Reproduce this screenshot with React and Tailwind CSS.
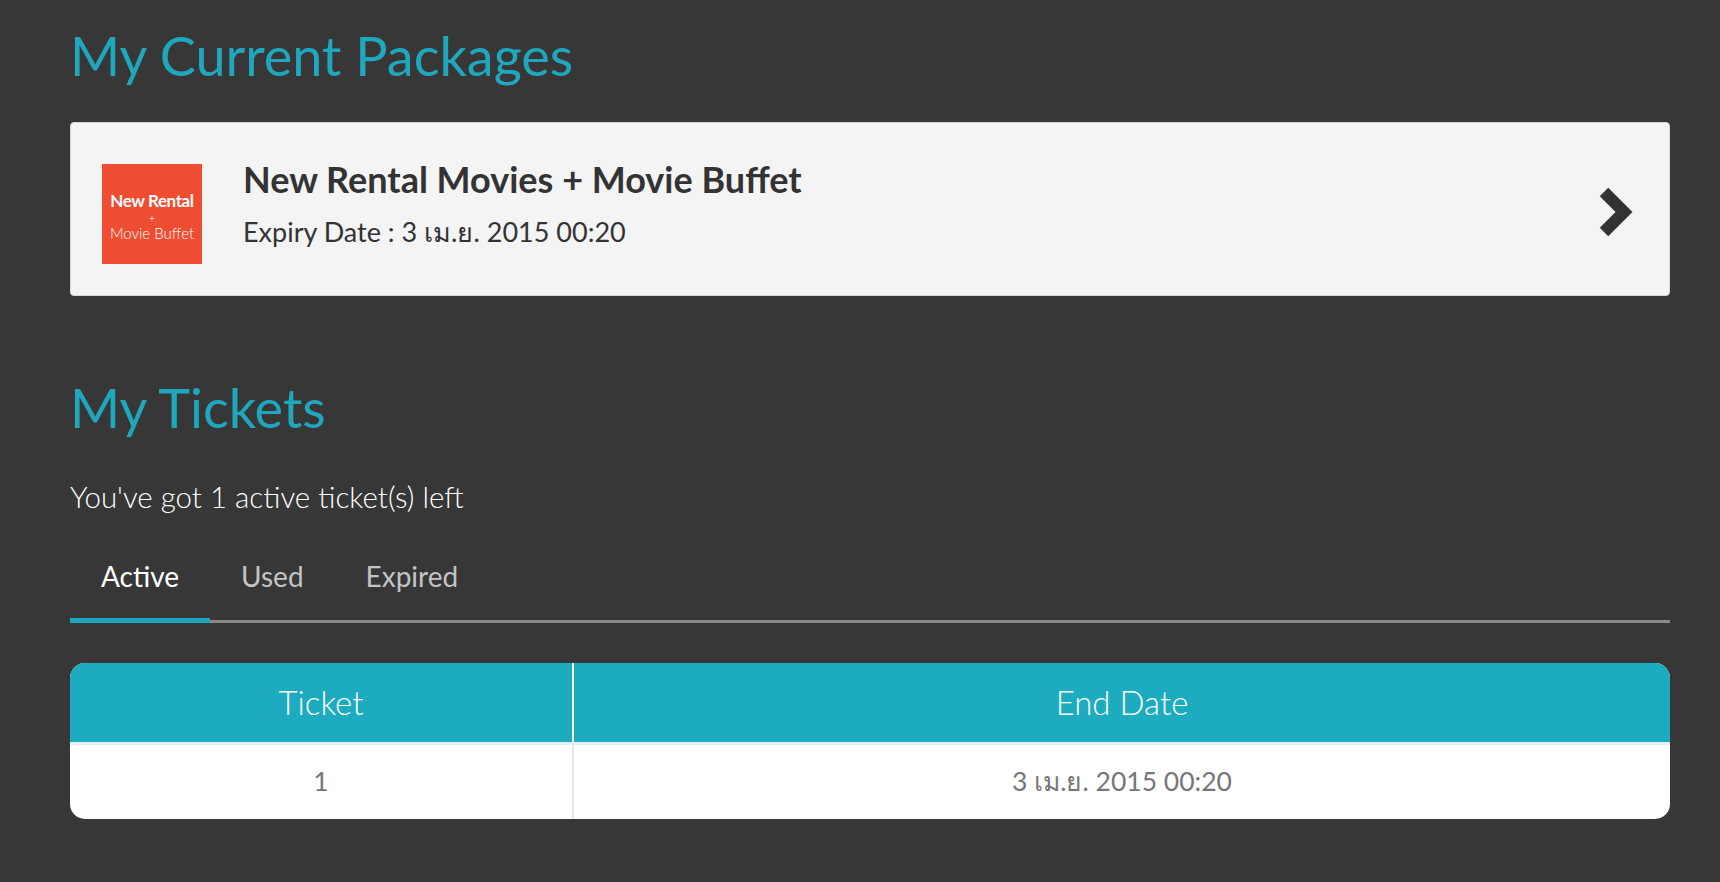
import React, { useState } from "react";

const packages = [
  {
    id: "rental-buffet",
    name: "New Rental Movies + Movie Buffet",
    expiry: "3 เม.ย. 2015 00:20",
  },
];

const tickets = {
  active: [{ no: 1, end: "3 เม.ย. 2015 00:20" }],
  used: [],
  expired: [],
};

const font = "font-['Lato','Noto_Sans',sans-serif]";

function PackageLogo() {
  return (
    <div className="w-[100px] h-[100px] mt-[11px] pt-[5px] shrink-0 bg-[#ef4d31] flex flex-col items-center justify-center text-white font-['Lato',sans-serif] leading-none">
      <div className="text-[17px] font-bold tracking-[-0.4px]">New Rental</div>
      <div className="text-[11px] font-light my-[3px]">+</div>
      <div className="text-[15px] font-light">Movie Buffet</div>
    </div>
  );
}

function Chevron() {
  return (
    <svg width="36" height="54" viewBox="0 0 36 52" className="shrink-0 mt-[6px]">
      <polyline
        points="7,6 27,26 7,46"
        fill="none"
        stroke="#333333"
        strokeWidth="12"
        strokeLinejoin="miter"
        strokeLinecap="butt"
      />
    </svg>
  );
}

function PackageCard({ pkg }) {
  return (
    <div className="h-[174px] rounded-[4px] border border-[#d6d6d6] bg-[#f4f4f4] flex items-center pl-[31px] pr-[36px]">
      <PackageLogo />
      <div className="flex-1 ml-[41px] pb-[11px]">
        <div className="text-[36px] font-bold text-[#333333] leading-tight">{pkg.name}</div>
        <div className="text-[27px] text-[#333333] leading-tight mt-[13px]">Expiry Date : {pkg.expiry}</div>
      </div>
      <Chevron />
    </div>
  );
}

export default function App() {
  const [tab, setTab] = useState("active");
  const rows = tickets[tab];

  return (
    <div className={`min-h-[882px] bg-[#373737] pl-[70px] pr-[50px] pt-[24px] ${font}`}>
      <h1 className="text-[54px] leading-[1.2] text-[#1fa8bd] font-normal">My Current Packages</h1>
      <div className="mt-[33px]">
        {packages.map((p) => (
          <PackageCard key={p.id} pkg={p} />
        ))}
      </div>

      <h2 className="mt-[80px] text-[54px] leading-[1.2] text-[#1fa8bd] font-normal">My Tickets</h2>
      <p className="mt-[38px] text-[29.5px] font-light text-white leading-tight">
        You've got {tickets.active.length} active ticket(s) left
      </p>

      <div className="mt-[44px] flex border-b-[3px] border-[#8a8a8a]">
        {[["active", "Active"], ["used", "Used"], ["expired", "Expired"]].map(([k, l]) => (
          <button
            key={k}
            onClick={() => setTab(k)}
            className={`px-[31px] pb-[24px] text-[28px] leading-tight -mb-[3px] border-b-[5px] ${
              tab === k ? "text-white border-[#1ba9bf]" : "text-[#c4c4c4] border-transparent"
            }`}
          >
            {l}
          </button>
        ))}
      </div>

      <div className="mt-[40px] rounded-[15px] overflow-hidden bg-white">
        <table className="w-full border-collapse">
          <thead>
            <tr className="bg-[#1dabbf] h-[80px]">
              <th className="w-[503px] text-[33px] font-light text-white border-r-2 border-white">Ticket</th>
              <th className="text-[33px] font-light text-white">End Date</th>
            </tr>
          </thead>
          <tbody>
            {rows.map((r) => (
              <tr key={r.no} className="h-[76px] border-t-[3px] border-[#dff1f4]">
                <td className="text-center text-[26.5px] text-[#777777] border-r-2 border-[#e6e6e6]">{r.no}</td>
                <td className="text-center text-[26.5px] text-[#777777]">{r.end}</td>
              </tr>
            ))}
          </tbody>
        </table>
      </div>
    </div>
  );
}
